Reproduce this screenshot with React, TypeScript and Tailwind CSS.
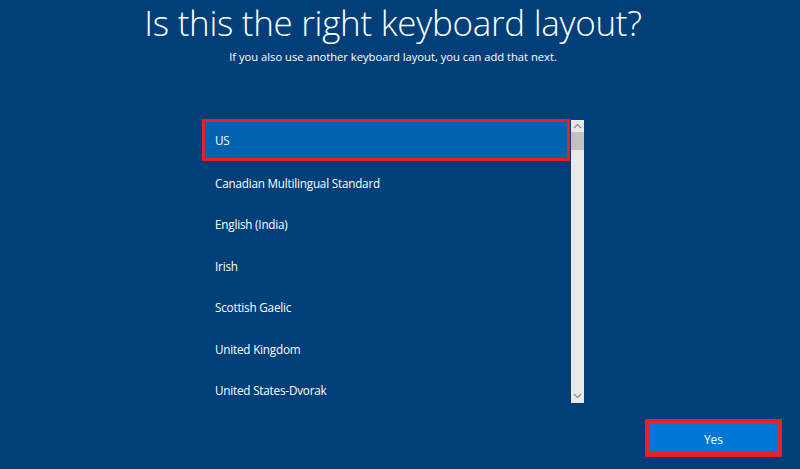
import React from 'react';

const layouts = [
  'US',
  'Canadian Multilingual Standard',
  'English (India)',
  'Irish',
  'Scottish Gaelic',
  'United Kingdom',
  'United States-Dvorak',
];

const Chevron = ({ up }: { up?: boolean }) => (
  <svg width="9" height="6" viewBox="0 0 9 6" className="block">
    <path
      d={up ? 'M1 5L4.5 1.5L8 5' : 'M1 1L4.5 4.5L8 1'}
      fill="none"
      stroke="#8a8a8a"
      strokeWidth="1.2"
    />
  </svg>
);

export default function App() {
  return (
    <div
      className="w-[800px] h-[469px] bg-[#013f78] text-white flex flex-col overflow-hidden"
      style={{ fontFamily: '"Open Sans", "Noto Sans", sans-serif' }}
    >
      <div className="pr-[14px]">
        <h1 className="text-center text-[35px] font-light leading-[46px] tracking-[-0.3px]">
          Is this the right keyboard layout?
        </h1>
        <p className="text-center text-[11.2px] leading-[16px] mt-[3px]">
          If you also use another keyboard layout, you can add that next.
        </p>
      </div>

      <div className="flex ml-[202px] mt-[54px]">
        <ul className="w-[368px] h-[284px] overflow-hidden tracking-[-0.2px]">
          {layouts.map((name, i) => (
            <li
              key={name}
              className={
                i === 0
                  ? 'h-[41.5px] flex items-center pl-[10px] pt-[3px] text-[11.7px] bg-[#0063b1] border-[3px] border-[#e8202a]'
                  : 'h-[41.5px] flex items-center pl-[13px] pt-[5px] text-[11.7px]'
              }
            >
              {name}
            </li>
          ))}
        </ul>
        <div className="ml-[1px] mt-[1px] w-[13px] h-[283px] bg-[#e9e9e9] flex flex-col items-center">
          <div className="h-[12px] flex items-center justify-center">
            <Chevron up />
          </div>
          <div className="w-full h-[18px] bg-[#c2c2c2]" />
          <div className="flex-1" />
          <div className="h-[14px] flex items-center justify-center">
            <Chevron />
          </div>
        </div>
      </div>

      <div className="flex justify-end pr-[18px] mt-[16px]">
        <button className="w-[137px] h-[38px] border-[5px] border-[#e8202a] bg-[#0078d7] text-[12px] text-white flex items-center justify-center pt-[3px]">
          Yes
        </button>
      </div>
    </div>
  );
}
